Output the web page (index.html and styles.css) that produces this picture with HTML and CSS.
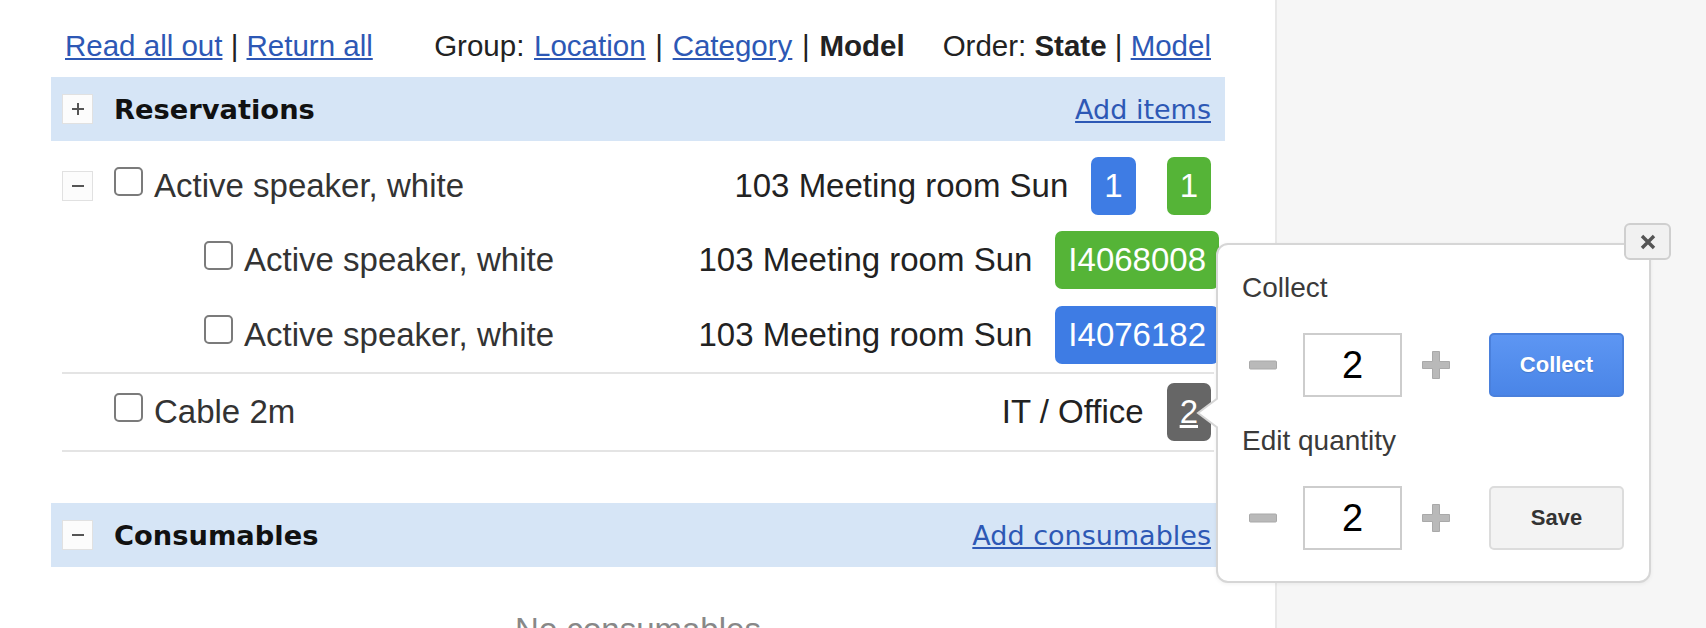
FILE: index.html
```html
<!DOCTYPE html>
<html>
<head>
<meta charset="utf-8">
<title>Reservations</title>
<link rel="stylesheet" href="styles.css">
</head>
<body>
<div class="page">
  <main class="content">
    <div class="toolbar">
      <div class="tb-left"><a href="#">Read all out</a> | <a href="#">Return all</a></div>
      <div class="tb-group">Group: <a href="#">Location</a> | <a href="#">Category</a> | <b>Model</b></div>
      <div class="tb-order">Order: <b>State</b> | <a href="#">Model</a></div>
    </div>

    <section class="section">
      <div class="sec-head">
        <span class="tgl"><svg width="14" height="14" viewBox="0 0 14 14"><path d="M7 1v12M1 7h12" stroke="#555" stroke-width="2"/></svg></span>
        <h2>Reservations</h2>
        <a class="sec-link" href="#">Add items</a>
      </div>
      <div class="rows">
        <div class="row">
          <span class="tgl"><svg width="14" height="14" viewBox="0 0 14 14"><path d="M1 7h12" stroke="#555" stroke-width="2"/></svg></span>
          <span class="cb"></span>
          <span class="name">Active speaker, white</span>
          <span class="loc">103 Meeting room Sun</span>
          <span class="badge blue">1</span>
          <span class="badge green second">1</span>
        </div>
        <div class="row child">
          <span class="cb"></span>
          <span class="name">Active speaker, white</span>
          <span class="loc">103 Meeting room Sun</span>
          <span class="badge green wide">I4068008</span>
        </div>
        <div class="row child sep">
          <span class="cb"></span>
          <span class="name">Active speaker, white</span>
          <span class="loc">103 Meeting room Sun</span>
          <span class="badge blue wide">I4076182</span>
        </div>
        <div class="row sep">
          <span class="tgl-space"></span>
          <span class="cb"></span>
          <span class="name">Cable 2m</span>
          <span class="loc">IT / Office</span>
          <span class="badge gray"><a href="#">2</a></span>
        </div>
      </div>
    </section>

    <section class="section consumables">
      <div class="sec-head">
        <span class="tgl"><svg width="14" height="14" viewBox="0 0 14 14"><path d="M1 7h12" stroke="#555" stroke-width="2"/></svg></span>
        <h2>Consumables</h2>
        <a class="sec-link" href="#">Add consumables</a>
      </div>
      <div class="empty">No consumables</div>
    </section>
  </main>
  <aside class="side"></aside>

  <div class="popover">
    <svg class="pop-arrow" width="22" height="30" viewBox="0 0 22 30"><path d="M22 0 L2 15 L22 30 Z" fill="#fff"/><path d="M22 0 L2 15 L22 30" fill="none" stroke="#d6d6d6" stroke-width="2"/></svg>
    <button class="pop-close"><svg width="16" height="16" viewBox="0 0 16 16"><path d="M2 2L14 14M14 2L2 14" stroke="#555" stroke-width="3.4"/></svg></button>
    <div class="pop-label">Collect</div>
    <div class="pop-row">
      <svg class="step minus" width="28" height="10" viewBox="0 0 28 10"><rect x="0.5" y="1" width="27" height="8" rx="1" fill="#b9b9b9" stroke="#a9a9a9"/></svg>
      <div class="qty">2</div>
      <svg class="step plus" width="28" height="28" viewBox="0 0 28 28"><path d="M10.5 0.5h7v10h10v7h-10v10h-7v-10h-10v-7h10z" fill="#b9b9b9" stroke="#a9a9a9"/></svg>
      <button class="btn btn-primary">Collect</button>
    </div>
    <div class="pop-label">Edit quantity</div>
    <div class="pop-row">
      <svg class="step minus" width="28" height="10" viewBox="0 0 28 10"><rect x="0.5" y="1" width="27" height="8" rx="1" fill="#b9b9b9" stroke="#a9a9a9"/></svg>
      <div class="qty">2</div>
      <svg class="step plus" width="28" height="28" viewBox="0 0 28 28"><path d="M10.5 0.5h7v10h10v7h-10v10h-7v-10h-10v-7h10z" fill="#b9b9b9" stroke="#a9a9a9"/></svg>
      <button class="btn btn-default">Save</button>
    </div>
  </div>
</div>
</body>
</html>
```

FILE: styles.css
```css
* { box-sizing: border-box; }
html, body { margin: 0; padding: 0; }
body {
  font-family: "Liberation Sans", Arial, Helvetica, sans-serif;
  color: #333;
  background: #fff;
  overflow: hidden;
}
.page {
  position: relative;
  display: flex;
  height: 628px;
  overflow: hidden;
}
.content {
  flex: none;
  width: 1275px;
  padding: 29px 50px 0 51px;
  background: #fff;
}
.side {
  flex: 1;
  background: #f6f6f6;
  border-left: 2px solid #e8e8e8;
}
a { color: #2d58b5; text-decoration: underline; }

.toolbar {
  display: flex;
  align-items: baseline;
  padding: 0 14px;
  margin-bottom: 14px;
  font-size: 29.5px;
  line-height: 34px;
  color: #222;
  white-space: nowrap;
}
.toolbar b { color: #222; }
.tb-group { margin-left: auto; word-spacing: 1.5px; }
.tb-order { margin-left: 38px; }

.sec-head {
  display: flex;
  align-items: center;
  height: 64px;
  padding: 0 14px 0 11px;
  background: #d6e5f6;
}
.sec-head h2 {
  margin: 0 0 0 21px;
  font: bold 27.3px "DejaVu Sans", Verdana, sans-serif;
  color: #111;
}
.sec-link {
  margin-left: auto;
  font: 27px "DejaVu Sans", Verdana, sans-serif;
}
.tgl {
  flex: none;
  width: 31px;
  height: 30px;
  display: flex;
  align-items: center;
  justify-content: center;
  background: #fcfcfc;
  border: 1px solid #e1e1e1;
}
.tgl-space { flex: none; width: 31px; }

.rows {
  margin: 0 11px;
  padding-top: 8px;
}
.row {
  box-sizing: content-box;
  display: flex;
  align-items: center;
  height: 74px;
  padding-right: 3px;
  font-size: 33px;
  white-space: nowrap;
}
.row.child { padding-left: 90px; }
.row.child .cb { margin-left: 52px; }
.row.sep { height: 75px; border-bottom: 2px solid #e4e4e4; }
.row.sep:last-child { height: 76px; }
.cb {
  flex: none;
  width: 29px;
  height: 29px;
  margin: 0 0 10px 21px;
  border: 2px solid #7b7b7b;
  border-radius: 5px;
  background: #fff;
}
.name { margin-left: 11px; color: #333; }
.loc { margin-left: auto; color: #222; }
.badge {
  flex: none;
  height: 58px;
  line-height: 58px;
  padding: 0 13px;
  margin-left: 23px;
  border-radius: 7px;
  color: #fff;
  font-size: 33px;
}
.badge.second { margin-left: 31px; }
.badge.wide { margin-right: -8px; }
.badge.blue { background: #3e7ce4; }
.badge.green { background: #55b437; }
.badge.gray { background: #666; }
.badge.gray a { color: #fff; }

.consumables { margin-top: 51px; }
.empty {
  padding-top: 43px;
  line-height: 40px;
  font-size: 33px;
  color: #888;
  text-align: center;
}

.popover {
  position: absolute;
  left: 1216px;
  top: 243px;
  width: 435px;
  height: 340px;
  padding: 26px 22px 0 24px;
  background: #fff;
  border: 2px solid #d6d6d6;
  border-radius: 12px;
  box-shadow: 0 1px 4px rgba(0,0,0,0.06);
}
.pop-arrow {
  position: absolute;
  left: -22px;
  top: 153px;
}
.pop-close {
  position: absolute;
  right: -22px;
  top: -22px;
  width: 47px;
  height: 37px;
  padding: 0;
  display: flex;
  align-items: center;
  justify-content: center;
  background: #f1f1f1;
  border: 2px solid #cfcfcf;
  border-radius: 6px;
}
.pop-label {
  font-size: 28px;
  line-height: 34px;
  color: #3a3a3a;
  margin-bottom: 28px;
}
.pop-row {
  display: flex;
  align-items: center;
  height: 64px;
  margin-bottom: 27px;
}
.step { flex: none; }
.minus { margin-left: 7px; }
.qty {
  flex: none;
  width: 99px;
  height: 64px;
  margin: 0 20px 0 26px;
  border: 2px solid #cdcdcd;
  background: #fff;
  font-size: 38px;
  line-height: 60px;
  text-align: center;
  color: #000;
}
.btn {
  flex: none;
  width: 135px;
  height: 64px;
  margin-left: 39px;
  border-radius: 5px;
  font: bold 22px "Liberation Sans", Arial, sans-serif;
}
.btn-primary {
  color: #fff;
  background: linear-gradient(#5d96f3, #4a85e7);
  border: 2px solid #4a80dc;
  text-shadow: 0 1px 1px rgba(0,0,0,0.15);
}
.btn-default {
  color: #333;
  background: #f3f3f3;
  border: 2px solid #dcdcdc;
}
```
